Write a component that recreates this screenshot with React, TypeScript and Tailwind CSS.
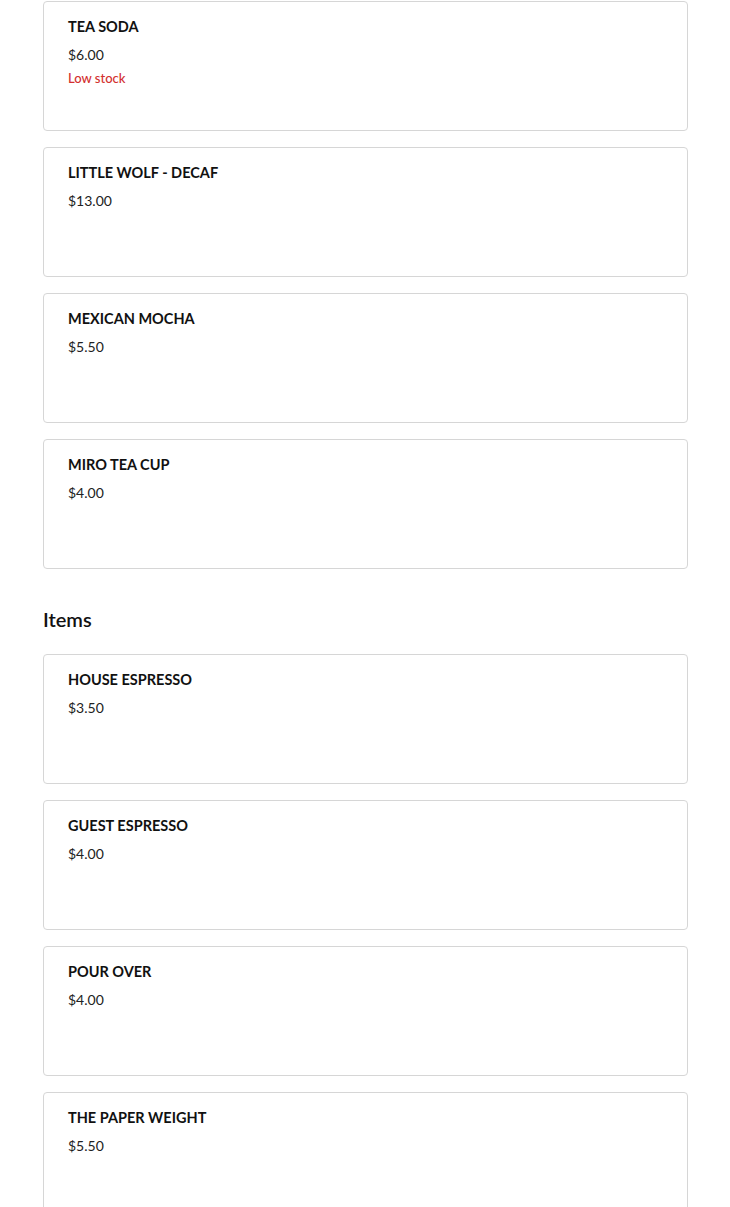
import React from 'react'

interface Product {
  name: string
  price: string
  lowStock?: boolean
}

const featured: Product[] = [
  { name: 'Tea Soda', price: '$6.00', lowStock: true },
  { name: 'Little Wolf - Decaf', price: '$13.00' },
  { name: 'Mexican Mocha', price: '$5.50' },
  { name: 'Miro Tea Cup', price: '$4.00' },
]

const items: Product[] = [
  { name: 'House Espresso', price: '$3.50' },
  { name: 'Guest Espresso', price: '$4.00' },
  { name: 'Pour Over', price: '$4.00' },
  { name: 'The Paper Weight', price: '$5.50' },
]

function ProductCard({ item }: { item: Product }) {
  return (
    <div className="h-[130px] rounded-[4px] border border-[#d6d6d6] bg-white px-6 pt-[15px]">
      <h3 className="text-[14.5px] leading-5 font-bold uppercase text-[#111]">{item.name}</h3>
      <p className="mt-[8px] text-[14px] leading-5 text-[#222]">{item.price}</p>
      {item.lowStock && (
        <p className="mt-[5px] text-[13px] leading-4 font-medium text-[#d3302f]">Low stock</p>
      )}
    </div>
  )
}

export default function App() {
  return (
    <div className="min-h-screen bg-white" style={{ fontFamily: 'Lato, "Open Sans", sans-serif' }}>
      <div className="mx-[43px] w-[645px] pt-[1px] pb-10">
        <div className="flex flex-col gap-4">
          {featured.map((item, i) => (
            <ProductCard key={i} item={item} />
          ))}
        </div>

        <h2 className="mt-[36px] mb-[21px] text-[20px] leading-7 font-semibold text-[#111]">Items</h2>

        <div className="flex flex-col gap-4">
          {items.map((item, i) => (
            <ProductCard key={i} item={item} />
          ))}
        </div>
      </div>
    </div>
  )
}
